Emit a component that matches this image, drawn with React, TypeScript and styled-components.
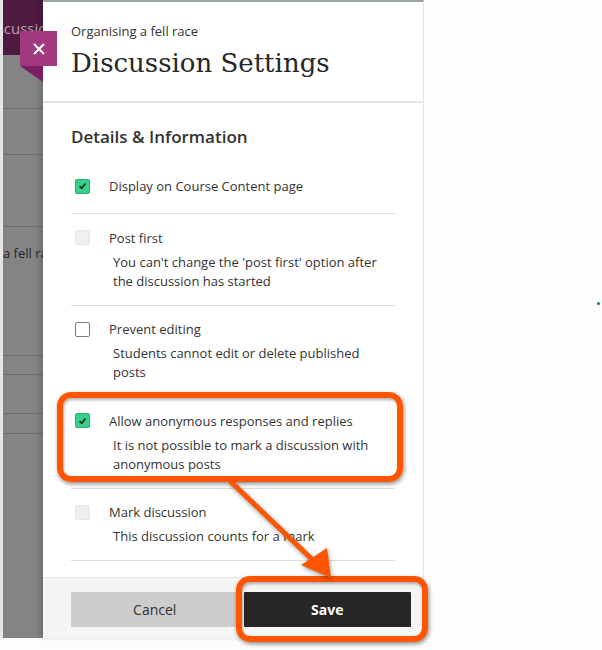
import React from "react";
import styled, { createGlobalStyle } from "styled-components";

const Global = createGlobalStyle`
  html, body { margin: 0; padding: 0; background: #fdfdfd; }
  body { font-family: "Open Sans", "Noto Sans", sans-serif; color: #333; }
  * { box-sizing: border-box; }
`;

const Page = styled.div`
  position: relative;
  width: 602px;
  height: 650px;
  display: flex;
  align-items: flex-start;
  background: #fdfdfd;
  overflow: hidden;
`;

/* dimmed page behind the panel */
const Backdrop = styled.div`
  width: 43px;
  height: 638px;
  border-left: 3px solid #e6e6e6;
  background: #848484;
  display: flex;
  flex-direction: column;
  overflow: hidden;
`;

const BackdropHeader = styled.div`
  height: 55px;
  background: #4e1a3f;
  color: #b9a2b3;
  font-size: 15px;
  line-height: 56px;
  white-space: nowrap;
  text-indent: -21px;
`;

const BackdropRow = styled.div<{ $h: number }>`
  height: ${(p) => p.$h}px;
  flex: none;
  border-bottom: 1px solid #6e6e6e;
  font-size: 13px;
  line-height: 18px;
  color: #262626;
  white-space: nowrap;
  padding-top: 17px;
`;

const BackdropFill = styled.div`
  flex: 1;
`;

const Panel = styled.section`
  width: 381px;
  height: 638px;
  flex: none;
  background: #fff;
  border-top: 2px solid #9ba7a2;
  border-right: 1px solid #e6e6e6;
  box-shadow: -4px 0 4px rgba(0, 0, 0, 0.14);
  display: flex;
  flex-direction: column;
`;

const Header = styled.header`
  height: 101px;
  padding: 20px 28px 0;
  border-bottom: 2px solid #e4e4e4;
`;

const Subtitle = styled.div`
  font-size: 13px;
  line-height: 18px;
  color: #333;
`;

const Title = styled.h1`
  margin: 6px 0 0;
  font-family: "DejaVu Serif", "Liberation Serif", serif;
  font-weight: normal;
  font-size: 26px;
  line-height: 34px;
  color: #262626;
`;

const Body = styled.div`
  flex: 1;
  padding: 0 28px;
`;

const SectionTitle = styled.h2`
  margin: 22px 0 13.5px;
  font-size: 17px;
  font-weight: 600;
  line-height: 24px;
  color: #333;
`;

const Option = styled.div<{ $hasDesc: boolean }>`
  padding: 14.5px 0 ${(p) => (p.$hasDesc ? 14 : 18)}px;
  border-bottom: 1px solid #dcdcdc;
`;

const OptionHead = styled.div`
  display: flex;
  align-items: center;
  gap: 19px;
  padding-left: 4px;
  font-size: 13px;
  line-height: 18px;
  color: #333;
`;

const Box = styled.span<{ $state: "checked" | "unchecked" | "disabled" }>`
  width: 15px;
  height: 15px;
  flex: none;
  border-radius: 2px;
  display: flex;
  align-items: center;
  justify-content: center;
  background: ${(p) =>
    p.$state === "checked" ? "#37cf8a" : p.$state === "disabled" ? "#efefef" : "#fff"};
  border: 1px solid
    ${(p) =>
      p.$state === "checked" ? "#27b172" : p.$state === "disabled" ? "#e6e6e6" : "#7b7b7b"};
`;

const Desc = styled.div`
  margin-top: 6px;
  padding-left: 42px;
  font-size: 13px;
  line-height: 19px;
  color: #333;
`;

const Footer = styled.footer`
  height: 61px;
  border-top: 1px solid #e4e4e4;
  background: #f5f5f5;
  padding: 14px 12px 11px 28px;
  display: grid;
  grid-template-columns: 1fr 1fr;
  gap: 5px;
`;

const Button = styled.button<{ $primary?: boolean }>`
  height: 35px;
  border: none;
  border-radius: 1px;
  font-family: "Open Sans", "Noto Sans", sans-serif;
  font-size: 14px;
  font-weight: ${(p) => (p.$primary ? 700 : 400)};
  background: ${(p) => (p.$primary ? "#262626" : "#cdcdcd")};
  color: ${(p) => (p.$primary ? "#fff" : "#333")};
`;

const CloseButton = styled.div`
  position: absolute;
  left: 20px;
  top: 31px;
  width: 37px;
  height: 35px;
  background: #a2397f;
  display: flex;
  align-items: center;
  justify-content: center;
  &::after {
    content: "";
    position: absolute;
    left: 0;
    top: 35px;
    width: 23px;
    height: 16px;
    background: #7c1f62;
    clip-path: polygon(0 0, 100% 0, 100% 100%);
  }
`;

const Highlight = styled.div<{ $x: number; $y: number; $w: number; $h: number }>`
  position: absolute;
  left: ${(p) => p.$x}px;
  top: ${(p) => p.$y}px;
  width: ${(p) => p.$w}px;
  height: ${(p) => p.$h}px;
  border: 6px solid #ff5500;
  border-radius: 14px;
  box-shadow: 1px 2px 4px rgba(0, 0, 0, 0.45), inset 1px 2px 3px rgba(0, 0, 0, 0.3);
  pointer-events: none;
`;

const Overlay = styled.svg`
  position: absolute;
  left: 0;
  top: 0;
  pointer-events: none;
  filter: drop-shadow(1px 2px 2px rgba(0, 0, 0, 0.4));
`;

const Dot = styled.span`
  position: absolute;
  left: 597px;
  top: 302px;
  width: 3px;
  height: 3px;
  border-radius: 50%;
  background: #137a5b;
`;

type State = "checked" | "unchecked" | "disabled";

const options: { label: string; desc?: string; state: State }[] = [
  { label: "Display on Course Content page", state: "checked" },
  {
    label: "Post first",
    desc: "You can't change the 'post first' option after the discussion has started",
    state: "disabled",
  },
  {
    label: "Prevent editing",
    desc: "Students cannot edit or delete published posts",
    state: "unchecked",
  },
  {
    label: "Allow anonymous responses and replies",
    desc: "It is not possible to mark a discussion with anonymous posts",
    state: "checked",
  },
  {
    label: "Mark discussion",
    desc: "This discussion counts for a mark",
    state: "disabled",
  },
];

const Tick = () => (
  <svg width="9" height="8" viewBox="0 0 9 8">
    <path d="M1.5 4.2 L3.6 6.2 L7.5 1.6" fill="none" stroke="#163b2a" strokeWidth="1.8" />
  </svg>
);

export default function App() {
  return (
    <>
      <Global />
      <Page>
        <Backdrop>
          <BackdropHeader>Discussions</BackdropHeader>
          <BackdropRow $h={54} />
          <BackdropRow $h={46} />
          <BackdropRow $h={72} />
          <BackdropRow $h={129}>a fell race</BackdropRow>
          <BackdropRow $h={19} />
          <BackdropRow $h={39} />
          <BackdropRow $h={20} />
          <BackdropFill />
        </Backdrop>
        <Panel>
          <Header>
            <Subtitle>Organising a fell race</Subtitle>
            <Title>Discussion Settings</Title>
          </Header>
          <Body>
            <SectionTitle>Details &amp; Information</SectionTitle>
            {options.map((o) => (
              <Option key={o.label} $hasDesc={!!o.desc}>
                <OptionHead>
                  <Box $state={o.state}>{o.state === "checked" && <Tick />}</Box>
                  <span>{o.label}</span>
                </OptionHead>
                {o.desc && <Desc>{o.desc}</Desc>}
              </Option>
            ))}
          </Body>
          <Footer>
            <Button>Cancel</Button>
            <Button $primary>Save</Button>
          </Footer>
        </Panel>
        <CloseButton>
          <svg width="12" height="12" viewBox="0 0 12 12">
            <path d="M1 1 L11 11 M11 1 L1 11" stroke="#fff" strokeWidth="2" />
          </svg>
        </CloseButton>
        <Highlight $x={57} $y={392} $w={346} $h={90} />
        <Highlight $x={236} $y={576} $w={192} $h={66} />
        <Overlay width="602" height="650" viewBox="0 0 602 650">
          <line x1="230" y1="481" x2="318" y2="565" stroke="#ff5500" strokeWidth="5" />
          <polygon points="331,578 301,565 327,548" fill="#ff5500" />
        </Overlay>
        <Dot />
      </Page>
    </>
  );
}
